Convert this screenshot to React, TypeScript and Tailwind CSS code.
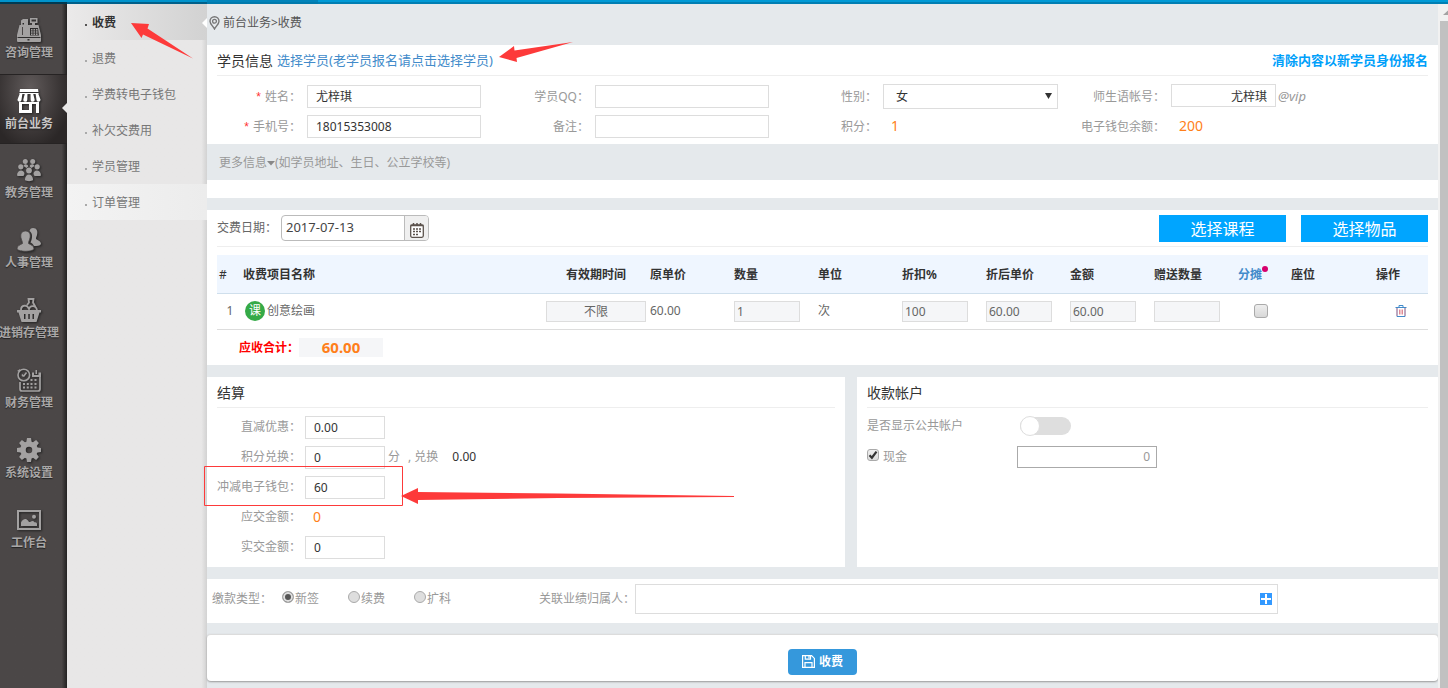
import * as React from "react";
import clsx from "clsx";

const modules = [
  { name: "咨询管理", icon: <RegisterIcon /> },
  { name: "前台业务", icon: <StoreIcon />, active: true },
  { name: "教务管理", icon: <GroupIcon /> },
  { name: "人事管理", icon: <UsersIcon /> },
  { name: "进销存管理", icon: <BasketIcon /> },
  { name: "财务管理", icon: <FinanceIcon /> },
  { name: "系统设置", icon: <GearIcon /> },
  { name: "工作台", icon: <PictureIcon /> },
];

const pages = ["收费", "退费", "学费转电子钱包", "补欠交费用", "学员管理", "订单管理"];

export default function App() {
  return (
    <div className="relative flex min-h-screen flex-col overflow-hidden bg-[#e5e9ec] font-['Noto_Sans','Noto_Sans_CJK_SC',sans-serif] text-xs text-[#999]">
      <TopBar />

      <div className="flex grow">
        <Sidebar />
        <Submenu />

        <main className="min-w-0 grow">
          <div className="flex h-[41px] items-center gap-[3px] pb-[3px] pl-[2px] text-[#555]">
            <PinIcon />
            <span>前台业务&gt;收费</span>
          </div>

          <div className="flex flex-col gap-3">
            <StudentPanel />
            <ItemsPanel />
            <div className="grid grid-cols-[638fr_581fr] gap-3">
              <SettlePanel />
              <AccountPanel />
            </div>
            <TypePanel />
          </div>

          <div className="mt-[11px] flex h-[47px] items-center justify-center rounded-sm border-t border-[#dcdcdc] bg-white pt-2 shadow-[0_1px_2px_#999]">
            <button
              type="button"
              className="flex h-[26px] w-[69px] items-center justify-center gap-1 rounded bg-[#3598dc] font-bold text-white"
            >
              <SaveIcon />
              收费
            </button>
          </div>
        </main>

        <Scrollbar />
      </div>

      <Annotations />
    </div>
  );
}

function TopBar() {
  return (
    <div className="flex h-1">
      <div className="w-[67px] border-b-2 border-[#003a52] bg-[#0093cc]" />
      <div className="w-[140px] border-b-2 border-[#00608a] bg-[#0093cc]" />
      <div className="w-[111px] border-b-2 border-[#007aad] bg-[#0083ba]" />
      <div className="grow border-b-2 border-[#007fb3] bg-[#009ad6]" />
    </div>
  );
}

function Sidebar() {
  return (
    <nav className="w-[67px] shrink-0 bg-[#4b4747] bg-linear-to-l from-[#232222] from-0% to-[#4b4747] to-8%">
      {modules.map((m) => (
        <a
          key={m.name}
          href="#"
          className={clsx(
            "relative flex h-[70px] pt-[14px] font-bold",
            m.active
              ? "border-y border-[#262323] bg-radial-[at_45%_20%] from-[#615b5b] from-0% to-[#2b2727] to-80% pt-[13px] text-[#c9c7c7]"
              : "text-[#a9a7a7]",
          )}
        >
          <span className="flex w-[58px] flex-col items-center whitespace-nowrap">
            <span className={m.active ? "text-white" : "text-[#a3a1a1]"}>
              {m.icon}
            </span>
            <span className="leading-[22px] text-shadow-[0_1px_1px_#222]">
              {m.name}
            </span>
          </span>
          {m.active && (
            <svg
              className="absolute top-7 right-0"
              width="5"
              height="10"
              viewBox="0 0 5 10"
            >
              <path d="M5 0L0 5l5 5z" fill="#e8e7e7" />
            </svg>
          )}
        </a>
      ))}
    </nav>
  );
}

function Submenu() {
  return (
    <nav className="w-[140px] shrink-0 bg-linear-to-l from-[#d2d2d2] from-0% to-[#e8e7e7] to-4%">
      {pages.map((p, i) => (
        <a
          key={p}
          href="#"
          className={clsx(
            "relative flex h-9 items-center gap-[5px] pt-[2px] pl-[18px]",
            i === 0
              ? "bg-linear-to-r from-[#ebeaea] to-[#d2d2d2] font-bold text-[#333]"
              : "text-[#777]",
            i === pages.length - 1 &&
              "bg-linear-to-r from-[#f3f3f3] to-[#ececec]",
          )}
        >
          <span
            className={clsx(
              "mt-[3px] size-[2px]",
              i === 0 ? "bg-[#555]" : "bg-[#aaa]",
            )}
          />
          <span>{p}</span>
          {i === 0 && (
            <svg
              className="absolute top-[14px] right-0"
              width="5"
              height="10"
              viewBox="0 0 5 10"
            >
              <path d="M5 0L0 5l5 5z" fill="#fff" />
            </svg>
          )}
        </a>
      ))}
    </nav>
  );
}

function Scrollbar() {
  return (
    <div className="flex w-[10px] shrink-0 flex-col overflow-hidden bg-[#f1f1f1] pl-[2px]">
      <svg className="h-[17px] w-2" viewBox="0 0 8 17">
        <path d="M3 11l5-4.500v4.500z" fill="#a3a3a3" />
      </svg>
      <div className="grow bg-[#c1c1c1]" />
    </div>
  );
}

const field =
  "h-[23px] border border-[#ddd] bg-white px-2 text-xs text-[#333] outline-none";

function Field({
  id,
  label,
  required,
  children,
}: {
  id?: string;
  label: string;
  required?: boolean;
  children: React.ReactNode;
}) {
  return (
    <div className="flex h-6 items-center">
      <label
        htmlFor={id}
        className="w-[84px] shrink-0 pt-[2px] text-right whitespace-nowrap"
      >
        {required && (
          <span className="mr-1 font-['Liberation_Sans'] text-[#f33]">*</span>
        )}
        {label}：
      </label>
      <div className="flex pl-[6px]">{children}</div>
    </div>
  );
}

function StudentPanel() {
  return (
    <section className="bg-white pb-[18px]">
      <div className="mx-[10px] flex h-[31px] items-center border-b border-[#eee] pt-[2px]">
        <h2 className="text-sm text-[#333]">学员信息</h2>
        <a href="#" className="ml-1 text-[13px] text-[#428bca]">
          选择学员(老学员报名请点击选择学员)
        </a>
        <a href="#" className="ml-auto text-[13px] font-bold text-[#00a0fa]">
          清除内容以新学员身份报名
        </a>
      </div>

      <div className="grid grid-cols-4 gap-y-[6px] pt-2 pr-[69px] pb-[6px] pl-[10px]">
        <Field id="name" label="姓名" required>
          <input id="name" className={clsx(field, "w-[174px]")} defaultValue="尤梓琪" />
        </Field>
        <Field id="qq" label="学员QQ">
          <input id="qq" className={clsx(field, "w-[174px]")} />
        </Field>
        <Field id="gender" label="性别">
          <div className="relative">
            <select
              id="gender"
              className="h-[25px] w-[175px] appearance-none border border-[#ddd] bg-white pt-[2px] pl-3 text-xs text-[#333] outline-none"
            >
              <option>女</option>
              <option>男</option>
            </select>
            <svg
              className="pointer-events-none absolute top-[9px] right-[6px]"
              width="7"
              height="6"
              viewBox="0 0 7 6"
            >
              <path d="M0 0h7L3.500 6z" fill="#333" />
            </svg>
          </div>
        </Field>
        <Field id="account" label="师生语帐号">
          <input
            id="account"
            className={clsx(field, "w-[105px] text-right")}
            defaultValue="尤梓琪"
          />
          <i className="pl-[2px] text-[13px] leading-6">@vip</i>
        </Field>

        <Field id="phone" label="手机号" required>
          <input id="phone" className={clsx(field, "w-[174px]")} defaultValue="18015353008" />
        </Field>
        <Field id="remark" label="备注">
          <input id="remark" className={clsx(field, "w-[174px]")} />
        </Field>
        <Field label="积分">
          <span className="pl-2 text-sm text-[#ff7f1a]">1</span>
        </Field>
        <Field label="电子钱包余额">
          <span className="pl-2 text-sm text-[#ff7f1a]">200</span>
        </Field>
      </div>

      <button
        type="button"
        className="flex h-9 w-full items-center bg-[#e5e9ec] pt-[2px] pl-3"
      >
        更多信息
        <svg width="8" height="5" viewBox="0 0 8 5">
          <path d="M0 0h8L4 4.500z" fill="#888" />
        </svg>
        (如学员地址、生日、公立学校等)
      </button>
    </section>
  );
}

const cell =
  "block h-[21px] border border-[#ddd] bg-[#f5f6f8] px-[2px] text-xs text-[#666] outline-none";

function ItemsPanel() {
  return (
    <section className="bg-white px-[10px]">
      <div className="flex h-[37px] items-center border-b border-[#eee] text-[#666]">
        <label htmlFor="date" className="w-16 whitespace-nowrap">
          交费日期：
        </label>
        <div className="flex h-[26px] w-[148px] overflow-hidden rounded border border-[#bbb]">
          <input
            id="date"
            className="min-w-0 grow px-1 text-[13px] text-[#444] outline-none"
            defaultValue="2017-07-13"
          />
          <button
            type="button"
            aria-label="选择日期"
            className="flex w-6 shrink-0 items-center justify-center border-l border-[#bbb] bg-[#efefef]"
          >
            <CalendarIcon />
          </button>
        </div>
        <div className="ml-auto flex gap-[15px] text-base text-white">
          <button type="button" className="h-[27px] w-[127px] bg-[#00a5ff] leading-7">
            选择课程
          </button>
          <button type="button" className="h-[27px] w-[127px] bg-[#00a5ff] leading-7">
            选择物品
          </button>
        </div>
      </div>

      <table className="mt-2 w-full table-fixed text-left text-[#666]">
        <colgroup>
          <col className="w-[22px]" />
          <col />
          <col className="w-[104px]" />
          <col className="w-[84px]" />
          <col className="w-[84px]" />
          <col className="w-[84px]" />
          <col className="w-[84px]" />
          <col className="w-[84px]" />
          <col className="w-[84px]" />
          <col className="w-[84px]" />
          <col className="w-[53px]" />
          <col className="w-[85px]" />
          <col className="w-[56px]" />
        </colgroup>
        <thead>
          <tr className="h-[38px] border-b border-[#cfdfec] bg-[#eff6ff] text-[#333] *:pt-[2px] *:pl-1">
            <th className="pl-[2px]! font-normal">#</th>
            <th>收费项目名称</th>
            <th className="pr-5 text-right">有效期时间</th>
            <th>原单价</th>
            <th>数量</th>
            <th>单位</th>
            <th>折扣%</th>
            <th>折后单价</th>
            <th>金额</th>
            <th>赠送数量</th>
            <th>
              <a href="#" className="relative text-[#428bca]">
                分摊
                <span className="absolute top-0 -right-[6px] size-[6px] rounded-full bg-[#d6006d]" />
              </a>
            </th>
            <th>座位</th>
            <th>操作</th>
          </tr>
        </thead>
        <tbody>
          <tr className="h-9 border-b border-[#ddd] *:pl-1">
            <td className="text-center">1</td>
            <td>
              <div className="flex items-center gap-[2px] pl-[2px]">
                <span className="flex size-5 items-center justify-center rounded-full bg-[#35aa47] text-white">
                  课
                </span>
                创意绘画
              </div>
            </td>
            <td>
              <input aria-label="有效期时间" className={clsx(cell, "w-[100px] text-center")} defaultValue="不限" />
            </td>
            <td>60.00</td>
            <td>
              <input aria-label="数量" className={clsx(cell, "w-[66px]")} defaultValue="1" />
            </td>
            <td>次</td>
            <td>
              <input aria-label="折扣" className={clsx(cell, "w-[66px]")} defaultValue="100" />
            </td>
            <td>
              <input aria-label="折后单价" className={clsx(cell, "w-[66px]")} defaultValue="60.00" />
            </td>
            <td>
              <input aria-label="金额" className={clsx(cell, "w-[66px]")} defaultValue="60.00" />
            </td>
            <td>
              <input aria-label="赠送数量" className={clsx(cell, "w-[66px]")} />
            </td>
            <td className="pl-0!">
              <input
                type="checkbox"
                aria-label="分摊"
                className="mx-auto block size-[14px] appearance-none rounded-[3px] border border-[#aaa] bg-linear-to-b from-[#eee] to-[#d8d8d8]"
              />
            </td>
            <td />
            <td className="pl-[2px]!">
              <button type="button" aria-label="删除" className="mx-auto block">
                <TrashIcon />
              </button>
            </td>
          </tr>
        </tbody>
      </table>

      <div className="flex h-[35px] items-center pl-[22px] font-bold">
        <span className="w-[60px] pt-[2px] whitespace-nowrap text-[#f00]">
          应收合计：
        </span>
        <span className="flex h-[19px] w-[84px] items-center justify-center bg-[#f5f6f8] text-[15px] text-[#ff7f1a]">
          60.00
        </span>
      </div>
    </section>
  );
}

function SettleRow({
  id,
  label,
  value,
  children,
}: {
  id?: string;
  label: string;
  value?: string;
  children?: React.ReactNode;
}) {
  return (
    <div className="flex h-[23px] items-center">
      <label htmlFor={id} className="w-[84px] text-right whitespace-nowrap">
        {label}：
      </label>
      {value && (
        <input id={id} className={clsx(field, "ml-1 w-20")} defaultValue={value} />
      )}
      {children}
    </div>
  );
}

function SettlePanel() {
  return (
    <section className="bg-white px-[10px] pb-2">
      <h2 className="flex h-[31px] items-center border-b border-[#eee] pt-[2px] text-sm text-[#333]">
        结算
      </h2>
      <div className="flex flex-col gap-[7px] pt-2">
        <SettleRow id="discount" label="直减优惠" value="0.00" />
        <SettleRow id="points" label="积分兑换" value="0">
          <span className="pl-[3px]">分</span>
          <span className="pl-2">, 兑换</span>
          <span className="pl-[14px] text-[#333]">0.00</span>
        </SettleRow>
        <SettleRow id="wallet" label="冲减电子钱包" value="60" />
        <SettleRow label="应交金额">
          <span className="pl-3 text-sm text-[#ff7f1a]">0</span>
        </SettleRow>
        <SettleRow id="paid" label="实交金额" value="0" />
      </div>
    </section>
  );
}

function AccountPanel() {
  return (
    <section className="bg-white px-[10px]">
      <h2 className="flex h-[31px] items-center border-b border-[#eee] pt-[2px] text-sm text-[#333]">
        收款帐户
      </h2>
      <div className="flex flex-col gap-[10px] pt-2">
        <div className="flex h-5 items-center">
          <span id="public" className="w-[153px]">
            是否显示公共帐户
          </span>
          <button
            type="button"
            role="switch"
            aria-checked="false"
            aria-labelledby="public"
            className="flex h-[18px] w-[51px] items-center rounded-full bg-[#dedede]"
          >
            <span className="size-5 shrink-0 rounded-full border border-[#dedede] bg-white" />
          </button>
        </div>
        <div className="flex h-[22px] items-center">
          <div className="flex w-[150px] items-start gap-1">
            <span className="relative size-3">
              <input
                id="cash"
                type="checkbox"
                defaultChecked
                className="block size-3 appearance-none rounded-[3px] border border-[#aaa] bg-linear-to-b from-[#eee] to-[#dcdcdc]"
              />
              <svg
                className="pointer-events-none absolute top-0 left-0"
                width="12"
                height="12"
                viewBox="0 0 12 12"
              >
                <path d="M2.500 6.200l2.400 2.500 4.600-6" fill="none" stroke="#333" strokeWidth="2.200" />
              </svg>
            </span>
            <label htmlFor="cash">现金</label>
          </div>
          <input
            aria-label="现金金额"
            className="h-[22px] w-[140px] border border-[#aaa] px-[6px] text-right text-xs outline-none"
            defaultValue="0"
          />
        </div>
      </div>
    </section>
  );
}

function TypePanel() {
  return (
    <section className="flex h-11 items-center bg-white pr-40 pb-1 pl-[5px]">
      <span className="w-[70px]">缴款类型：</span>
      {["新签", "续费", "扩科"].map((t, i) => (
        <label key={t} className="flex w-[66px] items-start gap-[1px]">
          <input
            type="radio"
            name="type"
            defaultChecked={i === 0}
            className="size-3 appearance-none rounded-full border border-[#aaa] bg-[#dedede] checked:bg-[#555] checked:shadow-[inset_0_0_0_2px_#dedede]"
          />
          {t}
        </label>
      ))}
      <label htmlFor="owner" className="ml-[59px] w-24 shrink-0 whitespace-nowrap">
        关联业绩归属人：
      </label>
      <div className="flex h-[30px] grow items-center border border-[#ddd] pr-[5px]">
        <input id="owner" className="min-w-0 grow px-2 outline-none" />
        <button type="button" aria-label="添加">
          <svg width="12" height="12" viewBox="0 0 12 12">
            <path d="M0 0h12v12H0z" fill="#3399ff" />
            <path d="M6 1v10M1 6h10" stroke="#fff" strokeWidth="2" />
          </svg>
        </button>
      </div>
    </section>
  );
}

/* Red arrows and box drawn over the page */
function Annotations() {
  return (
    <svg
      className="pointer-events-none absolute top-0 left-0"
      width="760"
      height="520"
      viewBox="0 0 760 520"
      fill="#fd3a3a"
    >
      <path d="M131 23l18 1-1.500 4.500L193 58.500l-50-24-1.500 3.500z" />
      <path d="M499 57l15-11 .5 4.500L573 42l-56.500 16 .5 4z" />
      <path d="M401 496l17-8v4l140 1.500 176 2.500v1l-176 1-140 2v4z" />
      <path d="M204.500 466.500h198v39h-198z" fill="none" stroke="#fd3a3a" />
    </svg>
  );
}

/* Icons */

function ModuleSvg({ children }: { children: React.ReactNode }) {
  return (
    <svg
      width="24"
      height="24"
      viewBox="0 0 24 24"
      fill="currentColor"
      className="drop-shadow-[1px_1px_1px_#222]"
    >
      {children}
    </svg>
  );
}

function RegisterIcon() {
  return (
    <ModuleSvg>
      <path
        fillRule="evenodd"
        d="M13 0h7.500v5H18v2h3.500L24 17v6a1 1 0 0 1-1 1H1a1 1 0 0 1-1-1v-6L2.500 7H4V2.500L6 1h5v6h4V5h-2zM14.500 1.500v2H19v-2zM5.500 5v1.500h1.500V5zM13 10v7.500h9L21 10zM0.500 19v1h23v-1zM10.500 21v1.500h2V21z"
      />
      <path d="M14 11h1.500v1.500H14zM16.500 11H18v1.500h-1.500zM19 11h1.500v1.500H19zM14 13.300h1.500v1.500H14zM16.500 13.300H18v1.500h-1.500zM19 13.300h1.500v1.500H19zM14 15.600h1.500V17H14zM16.500 15.600H18V17h-1.500zM19 15.600h1.500V17H19z" />
      <path d="M5.500 9v8" stroke="#4b4747" />
    </ModuleSvg>
  );
}

function StoreIcon() {
  return (
    <ModuleSvg>
      <path d="M3 0h18l.5 3h-19z" />
      <path d="M3 4h2.500L4.500 11a2 2 0 0 1-4-.5zM8 4h2.500l-.2 7a2 2 0 0 1-4-.3zM13.500 4H16l1.700 6.700a2 2 0 0 1-4 .3zM18.500 4H21l2.500 6.500a2 2 0 0 1-4 .5z" />
      <path d="M2.500 4h19v1h-19z" />
      <path
        fillRule="evenodd"
        d="M2 13h20v11h-3v-9h-4v9H2zM5 15v6h7v-6z"
      />
    </ModuleSvg>
  );
}

function GroupIcon() {
  return (
    <ModuleSvg>
      <circle cx="8.300" cy="3.500" r="2.500" />
      <circle cx="15.700" cy="3.500" r="2.500" />
      <path d="M6.500 8c.5-2.300 4.500-2.300 4.800.5L9.500 10zM17.500 8c-.5-2.300-4.500-2.300-4.800.5l1.800 1.500z" />
      <circle cx="3.800" cy="8.800" r="2.600" />
      <circle cx="20.200" cy="8.800" r="2.600" />
      <path d="M0 17.500c0-6.500 7.500-6.500 7.500-1.500L6.500 18H1zM24 17.500c0-6.500-7.500-6.500-7.500-1.500l1 2H23z" />
      <circle cx="12" cy="12.500" r="2.900" />
      <path d="M7.900 22c0-7.500 8.200-7.500 8.200 0-1.500 1.500-6.600 1.500-8.200 0z" />
    </ModuleSvg>
  );
}

function UsersIcon() {
  return (
    <ModuleSvg>
      <path d="M16 0c4 0 5 3.500 4 7-.5 1.700-1 2.500-1 4 2 1.500 5 2 5 5-1 2-4 2-7 2-1-2-2-3-3.500-3.500C15.500 11 16 5 12.500 3c.5-1.700 1.500-3 3.500-3z" />
      <path
        d="M8.500 3C13 3 14 7 12.700 11c-.5 1.800-1.200 2.500-1.200 4.500 2.500 1.500 5.500 2 5.500 5.500-2 3-15 3-17 0 0-3.500 3-4 5.500-5.500 0-2-.7-2.700-1.200-4.500C3 7 4 3 8.500 3z"
        stroke="#4b4747"
        strokeWidth=".8"
      />
    </ModuleSvg>
  );
}

function BasketIcon() {
  return (
    <ModuleSvg>
      <path
        fill="none"
        stroke="currentColor"
        strokeWidth="1.800"
        d="M4 12c0-5 6-6 8-1 1-4 7-4 8 1M10 7l2-2.500-.5-3.500h5l-.5 3.500L18.500 9"
      />
      <path
        fillRule="evenodd"
        d="M0 12h24v2.500h-1.500L19.500 24h-15L1.500 14.500H0zM7 16v5h1.500v-5zM11.300 16v5h1.500v-5zM15.500 16v5H17v-5z"
      />
    </ModuleSvg>
  );
}

function FinanceIcon() {
  return (
    <ModuleSvg>
      <circle cx="6.800" cy="7" r="5.800" fill="none" stroke="currentColor" strokeWidth="1.600" />
      <path d="M6.500 8.500l3-4M6.500 8.500L5 6.500" fill="none" stroke="currentColor" strokeWidth="1.500" />
      <path d="M15 4.500h2V7h4.500V4.500H24V9h-9zM18.500 2H20v4h-1.500zM0 3l3-2v3z" />
      <path
        d="M3 14v7c0 1.500 1 2 2 2h16c1.500 0 2-1 2-2V8"
        fill="none"
        stroke="currentColor"
        strokeWidth="1.700"
      />
      <path d="M13.500 11h2v2h-2zM17.500 11h2v2h-2zM6 15h2v2H6zM9.800 15h2v2h-2zM13.500 15h2v2h-2zM17.500 15h2v2h-2zM6 18.500h2v2H6zM9.800 18.500h2v2h-2zM13.500 18.500h2v2h-2zM17.500 18.500h2v2h-2z" />
    </ModuleSvg>
  );
}

function GearIcon() {
  return (
    <ModuleSvg>
      <circle cx="12" cy="12" r="6" fill="none" stroke="currentColor" strokeWidth="5.500" />
      {[0, 45, 90, 135].map((a) => (
        <path
          key={a}
          d="M10 0h4l.8 5H9.200zM10 24h4l.8-5H9.200z"
          transform={`rotate(${a} 12 12)`}
        />
      ))}
    </ModuleSvg>
  );
}

function PictureIcon() {
  return (
    <ModuleSvg>
      <path fillRule="evenodd" d="M0 2h24v20H0zM2 4v16h20V4z" />
      <path d="M4 18v-3.500C5.500 11 9 9.500 11 12.500c.8 1.300 1.500 2 2.500 1.300 2-1.300 3-.8 4 .5 1.500-.5 2.500.2 2.500 1.700v2z" />
      <circle cx="17" cy="8.800" r="2" />
    </ModuleSvg>
  );
}

function PinIcon() {
  return (
    <svg width="11" height="14" viewBox="0 0 11 14" fill="none" stroke="#777">
      <path d="M5.500 13C4 10 1 8 1 5.200a4.500 4.500 0 0 1 9 0C10 8 7 10 5.500 13z" strokeWidth="1.400" />
      <circle cx="5.500" cy="5.300" r="1.900" strokeWidth="1.300" />
    </svg>
  );
}

function CalendarIcon() {
  return (
    <svg width="14" height="15" viewBox="0 0 14 15" className="mt-1">
      <rect x=".7" y="2" width="12.600" height="12.300" rx="1.500" fill="#fff" stroke="#5b524c" strokeWidth="1.300" />
      <path d="M.5 2.500h13M3.500 0v3M7 0v3M10.500 0v3" stroke="#5b524c" strokeWidth="1.500" />
      <path
        d="M3 6h2M6 6h2M9 6h2M3 8.500h2M6 8.500h2M9 8.500h2M3 11.500h2M6 11.500h2"
        stroke="#5b524c"
        strokeWidth="1.600"
      />
    </svg>
  );
}

function TrashIcon() {
  return (
    <svg width="12" height="12" viewBox="0 0 12 12" fill="none" stroke="#428bca">
      <path d="M.5 2.500h11M4 2.500v-2h4v2M2 3v8.500h8V3" />
      <path d="M4.500 4.500v5M6 4.500v5M7.500 4.500v5" stroke="#e08a94" />
      <path d="M2 3v8M10 3v8" stroke="#d98a9a" />
    </svg>
  );
}

function SaveIcon() {
  return (
    <svg width="13" height="13" viewBox="0 0 13 13" fill="none" stroke="#fff" strokeWidth="1.200">
      <path d="M.6.6h9l2.800 2.800v9H.6z" />
      <path d="M3.300.6v3.600h5.200V.6M3 12.400V7.600h7v4.800" />
      <path d="M7 1v2.600" />
    </svg>
  );
}
